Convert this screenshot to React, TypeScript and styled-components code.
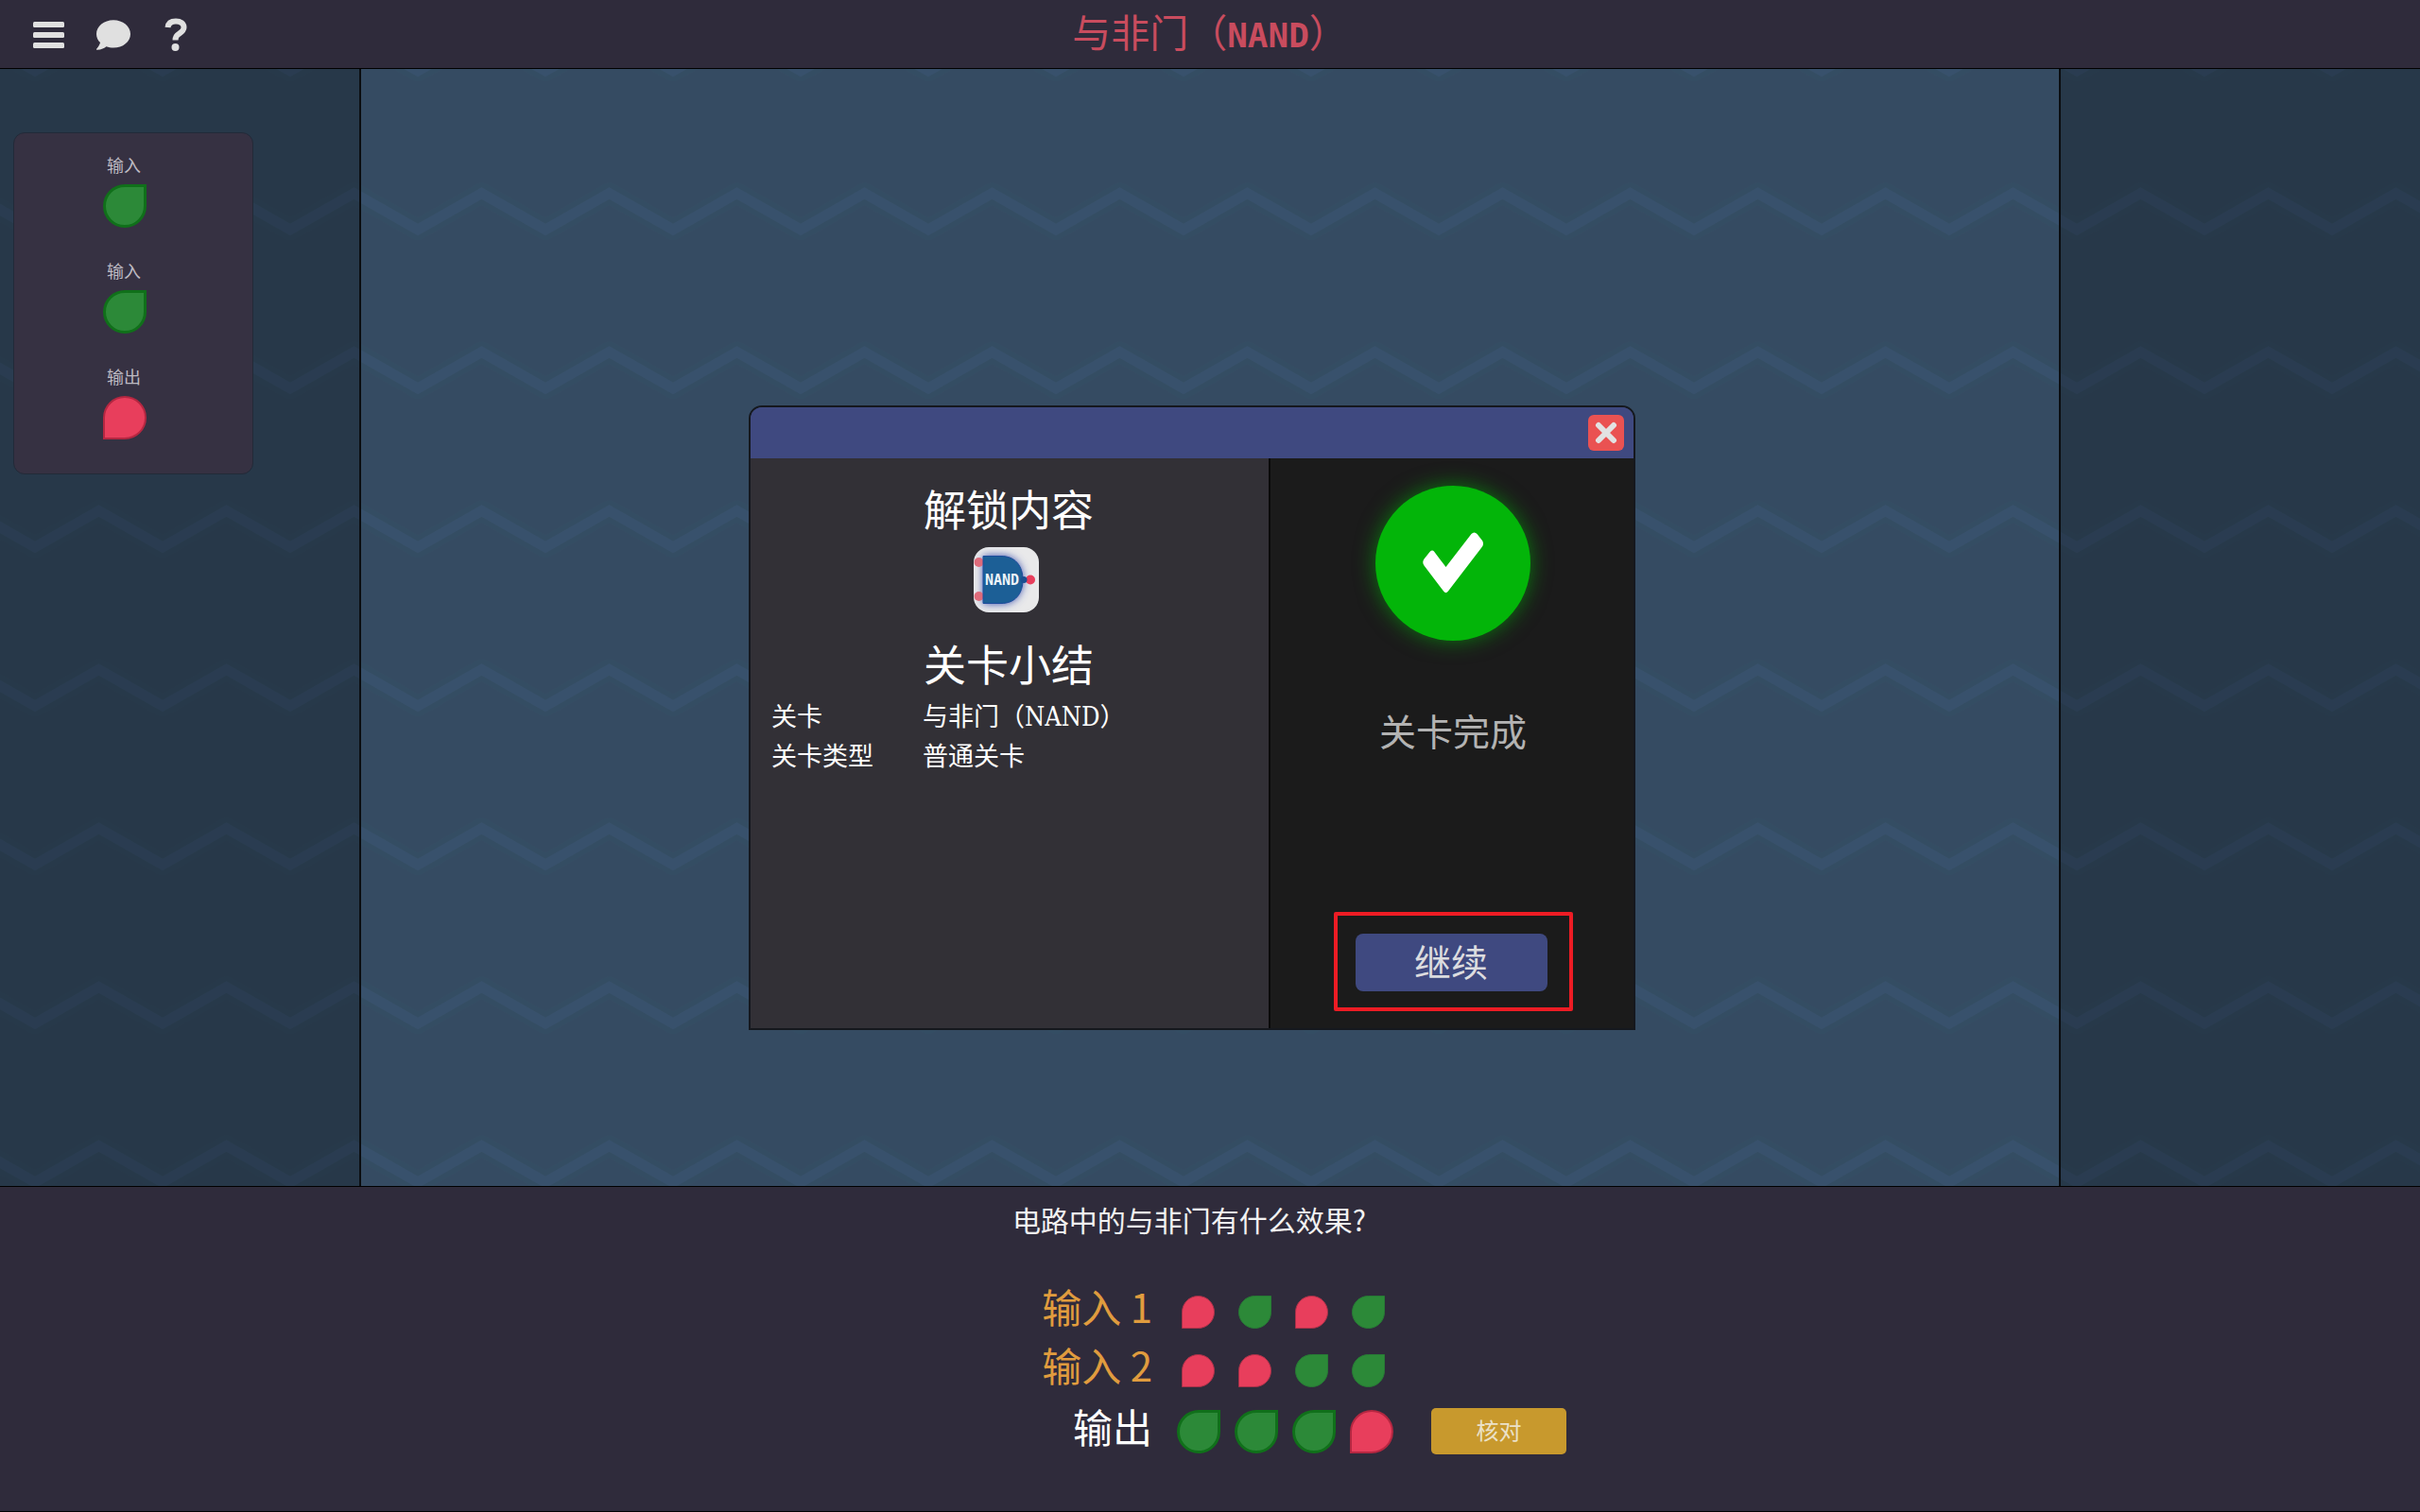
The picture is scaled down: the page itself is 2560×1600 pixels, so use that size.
import React, { useState } from "react";
import styled, { createGlobalStyle } from "styled-components";
import { FaComment } from "react-icons/fa";

const HAN = `"Noto Sans CJK SC", "Noto Sans", sans-serif`;
const MONO = `"DejaVu Sans Mono", monospace`;
const SLAB = `"DejaVu Serif Condensed", "DejaVu Serif", serif`;

const GlobalStyle = createGlobalStyle`
  * { box-sizing: border-box; }
  body { margin: 0; background: #2f2b3b; font-family: ${HAN}; color: #f2f2f2; }
  button { font-family: inherit; padding: 0; border: 0; cursor: pointer; }
  h1, h2, p, dl, dd, dt { margin: 0; font-weight: 400; }
`;

const Page = styled.div`
  position: relative;
  min-height: 100vh;
  display: flex;
  flex-direction: column;
`;

const TopBar = styled.header`
  display: grid;
  grid-template-columns: 1fr auto 1fr;
  align-items: center;
  height: 73px;
  border-bottom: 1px solid #000;
  background: #2f2b3b;
`;

const Tools = styled.nav`
  display: flex;
  align-items: center;
  gap: 34px;
  padding: 2px 0 0 35px;
`;

const ToolButton = styled.button`
  display: flex;
  background: none;
  color: #e0e0e0;
`;

const LevelTitle = styled.h1`
  font-size: 41px;
  line-height: 60px;
  color: #c94c5e;
  padding-bottom: 8px;
`;

const TitleLatin = styled.span`
  font-family: ${MONO};
  font-size: 36px;
  font-weight: 700;
  line-height: 1;
`;

const Stage = styled.main`
  position: relative;
  flex: 1;
  display: flex;
  background: #354b62;
`;

const Waves = styled.svg`
  position: absolute;
  inset: 0;
  width: 100%;
  height: 100%;
`;

const SidePanel = styled.aside<{ $side: "left" | "right" }>`
  position: relative;
  width: 382px;
  padding: 67px 14px;
  background: rgba(0, 0, 0, 0.25);
  border: 0 solid #0b0d10;
  border-${(p) => (p.$side === "left" ? "right" : "left")}-width: 2px;
`;

const Board = styled.section`
  flex: 1;
`;

const PartsCard = styled.div`
  display: flex;
  flex-direction: column;
  align-items: center;
  gap: 33px;
  width: 254px;
  padding: 21px 18px 36px 0;
  border: 1px solid #222a38;
  border-radius: 12px;
  background: #363142;
`;

const Part = styled.div`
  display: flex;
  flex-direction: column;
  align-items: center;
  gap: 9px;
`;

const PartLabel = styled.span`
  padding-right: 2px;
  font-size: 18px;
  line-height: 24px;
  color: #bdbac2;
`;

type DropProps = { $on: boolean; $large?: boolean };

const dropStyle = (p: DropProps) => `
  display: block;
  width: ${p.$large ? 46 : 35}px;
  height: ${p.$large ? 46 : 35}px;
  background: ${p.$on ? "#2c8938" : "#e83e5c"};
  border: ${p.$large ? (p.$on ? 3 : 2) : 1}px solid ${
    p.$on ? (p.$large ? "#10701a" : "#277a35") : p.$large ? "#b52741" : "#a93249"
  };
  border-radius: ${p.$on ? "50% 0 50% 50%" : "50% 50% 50% 0"};
`;

const Drop = styled.span<DropProps>`
  ${dropStyle}
`;

const DropToggle = styled.button<DropProps>`
  ${dropStyle}
`;

const Overlay = styled.div`
  position: absolute;
  inset: 0;
  display: grid;
  place-items: center;
  padding: 0 38px 81px 0;
  pointer-events: none;
`;

const Dialog = styled.div`
  display: flex;
  flex-direction: column;
  width: 938px;
  min-height: 661px;
  border: 2px solid #15181e;
  border-radius: 14px 14px 0 0;
  overflow: hidden;
  pointer-events: auto;
`;

const DialogBar = styled.div`
  display: flex;
  align-items: center;
  justify-content: flex-end;
  height: 54px;
  padding-right: 10px;
  background: #3f4980;
`;

const CloseButton = styled.button`
  display: grid;
  place-items: center;
  width: 38px;
  height: 38px;
  border-radius: 6px;
  background: #ea5252;
  color: #e2e2e2;
`;

const DialogBody = styled.div`
  flex: 1;
  display: flex;
`;

const Summary = styled.section`
  flex: 1;
  display: flex;
  flex-direction: column;
  align-items: center;
  padding: 23px 24px 23px 22px;
  background: #323036;
  color: #fff;
`;

const Heading = styled.h2`
  font-size: 45px;
  line-height: 60px;
`;

const GateIcon = styled.svg`
  width: 69px;
  height: 69px;
  margin: 11px 5px 24px 0;
`;

const GateText = styled.text`
  font-family: ${MONO};
  font-size: 15px;
  font-weight: 700;
  fill: #eef3f8;
`;

const Facts = styled.dl`
  align-self: stretch;
  display: grid;
  grid-template-columns: 160px 1fr;
  margin-top: 4px;
  font-size: 27px;
  line-height: 42px;
`;

const Slab = styled.span`
  font-family: ${SLAB};
  line-height: 1;
`;

const Outcome = styled.section`
  display: flex;
  flex-direction: column;
  align-items: center;
  width: 386px;
  padding: 29px 0 18px 2px;
  border-left: 2px solid #0a0a0a;
  background: #1b1b1b;
`;

const Badge = styled.div`
  display: grid;
  place-items: center;
  width: 164px;
  height: 164px;
  border-radius: 50%;
  background: #03b509;
  box-shadow: 0 0 22px rgba(3, 181, 9, 0.6);
`;

const OutcomeText = styled.p`
  margin-top: 68px;
  font-size: 39px;
  line-height: 52px;
  color: #b3b3b3;
`;

const Callout = styled.div`
  margin-top: auto;
  padding: 19px 23px 17px 19px;
  border: 4px solid #ed1c24;
  border-radius: 2px;
`;

const ContinueButton = styled.button`
  display: block;
  width: 203px;
  height: 61px;
  padding-bottom: 4px;
  border-radius: 8px;
  background: #3f4980;
  color: #dcdcdf;
  font-size: 39px;
  line-height: 57px;
`;

const Footer = styled.footer`
  padding: 14px 0 50px;
  border: 0 solid #000;
  border-width: 1px 0;
  background: #2f2b3b;
`;

const Question = styled.p`
  margin-bottom: 47px;
  padding-right: 44px;
  font-size: 30px;
  line-height: 40px;
  text-align: center;
`;

const SignalRow = styled.div<{ $tall?: boolean }>`
  display: grid;
  grid-template-columns: 10fr 11fr;
  align-items: center;
  height: ${(p) => (p.$tall ? 68 : 62)}px;
`;

const SignalLabel = styled.span<{ $accent?: boolean }>`
  padding-bottom: 12px;
  text-align: right;
  white-space: pre;
  font-size: 42px;
  line-height: 48px;
  color: ${(p) => (p.$accent ? "#e09c3e" : "#ffffff")};
`;

const Signals = styled.div<{ $large?: boolean }>`
  display: flex;
  align-items: center;
  gap: ${(p) => (p.$large ? 15 : 25)}px;
  padding-left: ${(p) => (p.$large ? 26 : 31)}px;
`;

const CheckButton = styled.button`
  width: 143px;
  height: 49px;
  margin: 0 0 2px 25px;
  padding-bottom: 4px;
  border-radius: 5px;
  background: #c8992d;
  color: #ebe1c8;
  font-size: 24px;
  line-height: 45px;
`;

function MenuIcon() {
  return (
    <svg width="33" height="28" viewBox="0 0 33 28" fill="currentColor" aria-hidden="true">
      <rect x="0" y="0" width="33" height="6" rx="1.5" />
      <rect x="0" y="11" width="33" height="6" rx="1.5" />
      <rect x="0" y="22" width="33" height="6" rx="1.5" />
    </svg>
  );
}

function HelpIcon() {
  return (
    <svg width="30" height="38" viewBox="0 0 30 38" fill="none" aria-hidden="true">
      <path
        d="M5.500 11 C6 6.500 9.500 4.500 14 4.500 C19 4.500 22.500 7 22.500 11 C22.500 14.500 20 16 17 18 C14.500 19.500 13.500 21 13.500 24.500"
        stroke="currentColor"
        strokeWidth="6"
      />
      <circle cx="13.500" cy="32" r="4" fill="currentColor" />
    </svg>
  );
}

function CloseIcon() {
  return (
    <svg width="24" height="24" viewBox="0 0 24 24" aria-hidden="true">
      <path
        d="M4 4 L20 20 M20 4 L4 20"
        stroke="currentColor"
        strokeWidth="6"
        strokeLinecap="round"
      />
    </svg>
  );
}

function WaveBackdrop() {
  const wave = "M-98 170 L-30.5 131.5 L37 170 L104.5 131.5 L172 170";
  return (
    <Waves aria-hidden="true">
      <defs>
        <pattern id="waves" width="135" height="168" patternUnits="userSpaceOnUse">
          <g fill="none">
            <g stroke="#344d63" strokeWidth="22" strokeLinejoin="round">
              <path d={wave} />
              <path d={wave} transform="translate(0 -168)" />
            </g>
            <g stroke="#38516c" strokeWidth="11">
              <path d={wave} />
              <path d={wave} transform="translate(0 -168)" />
            </g>
          </g>
        </pattern>
      </defs>
      <rect width="100%" height="100%" fill="url(#waves)" />
    </Waves>
  );
}

function NandIcon() {
  return (
    <GateIcon viewBox="0 0 69 69" role="img" aria-label="NAND">
      <defs>
        <clipPath id="tile">
          <rect width="69" height="69" rx="16" />
        </clipPath>
        <filter id="glow" x="-40%" y="-40%" width="180%" height="180%">
          <feGaussianBlur stdDeviation="4" />
        </filter>
      </defs>
      <g clipPath="url(#tile)">
        <rect width="69" height="69" fill="#e9e9ea" />
        <path
          d="M10 9 H29 C44 9 52 20 52 34 C52 49 44 60 29 60 H10 Z"
          fill="#3a4fae"
          filter="url(#glow)"
        />
        <circle cx="5.5" cy="16" r="5" fill="#de6b7b" />
        <circle cx="5.5" cy="52" r="5" fill="#de6b7b" />
        <circle cx="60" cy="34.5" r="5" fill="#e83e5c" />
        <path
          d="M10 9.5 H29 C44 9.5 52 20 52 34.5 C52 49 44 59.5 29 59.5 H10 Z"
          fill="#1c5f96"
          stroke="#1d4c9c"
          strokeWidth="1"
        />
        <circle cx="53" cy="34.5" r="3.5" fill="#1b4f90" />
      </g>
      <GateText x="30" y="40" textAnchor="middle">
        NAND
      </GateText>
    </GateIcon>
  );
}

function CheckMark() {
  return (
    <svg width="64" height="66" viewBox="0 0 64 66" aria-hidden="true">
      <path
        d="M12 20.500 L24.500 37 L51.500 2 Q54.500 -1 57.500 2 L63 9 Q65 12 63 15.500 L27 62.500 Q24.500 66 22 62.500 L1.500 35.500 Q-1 32 1.500 28.500 L7.500 21 Q10 18.500 12 20.500 Z"
        fill="#fff"
      />
    </svg>
  );
}

const parts = [
  { label: "输入", on: true },
  { label: "输入", on: true },
  { label: "输出", on: false },
];

const inputs = [
  { label: "输入 1", values: [false, true, false, true] },
  { label: "输入 2", values: [false, false, true, true] },
];

export default function App() {
  const [open, setOpen] = useState(true);
  const [outputs, setOutputs] = useState([true, true, true, false]);
  const toggle = (n: number) => setOutputs(outputs.map((v, i) => (i === n ? !v : v)));

  return (
    <Page>
      <GlobalStyle />
      <TopBar>
        <Tools>
          <ToolButton aria-label="菜单">
            <MenuIcon />
          </ToolButton>
          <ToolButton aria-label="对话">
            <FaComment size={36} />
          </ToolButton>
          <ToolButton aria-label="帮助">
            <HelpIcon />
          </ToolButton>
        </Tools>
        <LevelTitle>
          与非门（<TitleLatin>NAND</TitleLatin>）
        </LevelTitle>
      </TopBar>

      <Stage>
        <WaveBackdrop />
        <SidePanel $side="left">
          <PartsCard>
            {parts.map((part, i) => (
              <Part key={i}>
                <PartLabel>{part.label}</PartLabel>
                <Drop $on={part.on} $large />
              </Part>
            ))}
          </PartsCard>
        </SidePanel>
        <Board />
        <SidePanel $side="right" />
      </Stage>

      <Footer>
        <Question>电路中的与非门有什么效果?</Question>
        {inputs.map((row) => (
          <SignalRow key={row.label}>
            <SignalLabel $accent>{row.label}</SignalLabel>
            <Signals>
              {row.values.map((on, i) => (
                <Drop key={i} $on={on} />
              ))}
            </Signals>
          </SignalRow>
        ))}
        <SignalRow $tall>
          <SignalLabel>输出</SignalLabel>
          <Signals $large>
            {outputs.map((on, i) => (
              <DropToggle
                key={i}
                $on={on}
                $large
                aria-label={`输出 ${i + 1}`}
                aria-pressed={on}
                onClick={() => toggle(i)}
              />
            ))}
            <CheckButton onClick={() => setOpen(true)}>核对</CheckButton>
          </Signals>
        </SignalRow>
      </Footer>

      {open && (
        <Overlay>
          <Dialog role="dialog" aria-label="关卡完成">
            <DialogBar>
              <CloseButton aria-label="关闭" onClick={() => setOpen(false)}>
                <CloseIcon />
              </CloseButton>
            </DialogBar>
            <DialogBody>
              <Summary>
                <Heading>解锁内容</Heading>
                <NandIcon />
                <Heading>关卡小结</Heading>
                <Facts>
                  <dt>关卡</dt>
                  <dd>
                    与非门（<Slab>NAND</Slab>）
                  </dd>
                  <dt>关卡类型</dt>
                  <dd>普通关卡</dd>
                </Facts>
              </Summary>
              <Outcome>
                <Badge>
                  <CheckMark />
                </Badge>
                <OutcomeText>关卡完成</OutcomeText>
                <Callout>
                  <ContinueButton onClick={() => setOpen(false)}>继续</ContinueButton>
                </Callout>
              </Outcome>
            </DialogBody>
          </Dialog>
        </Overlay>
      )}
    </Page>
  );
}
